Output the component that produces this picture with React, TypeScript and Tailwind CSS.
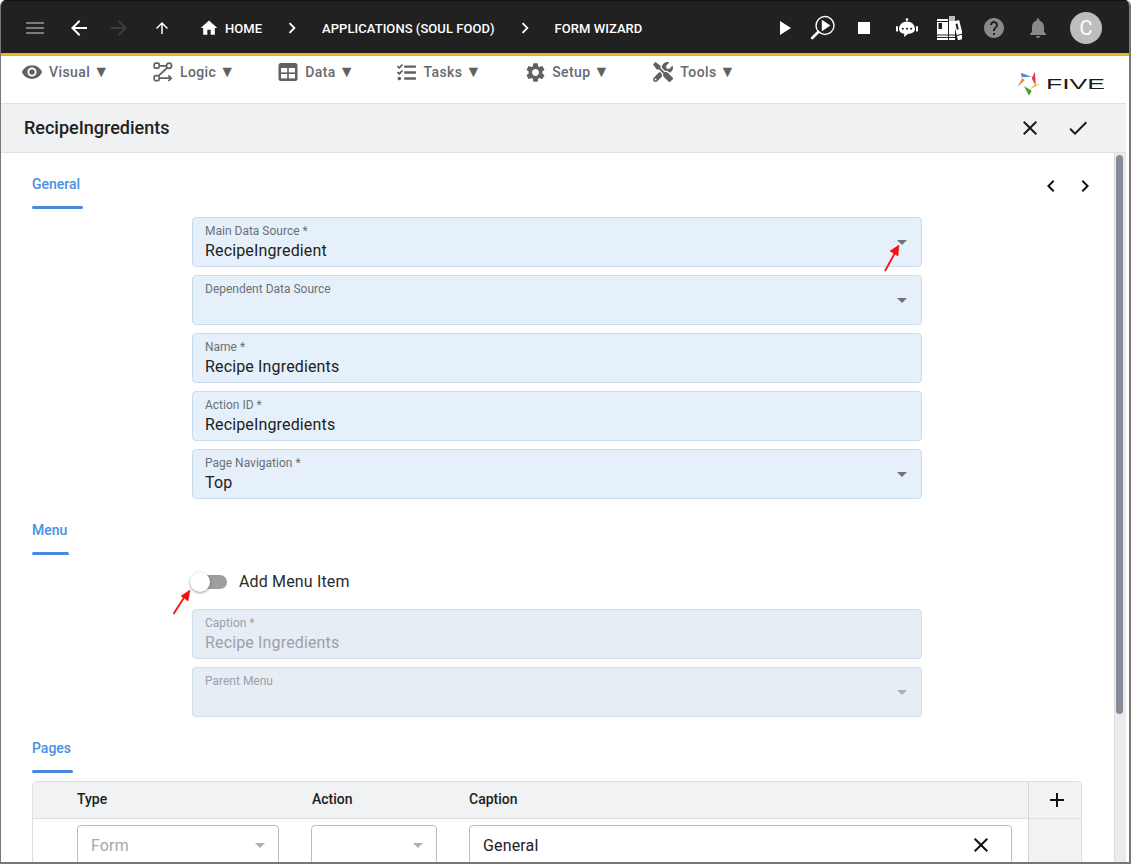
import React from "react";
import { FaTasks, FaTools } from "react-icons/fa";

const P: Record<string, string> = {
  menu: "M3 18h18v-2H3v2zm0-5h18v-2H3v2zm0-7v2h18V6H3z",
  back: "M20 11H7.83l5.59-5.59L12 4l-8 8 8 8 1.41-1.41L7.83 13H20v-2z",
  forward: "M12 4l-1.41 1.41L16.17 11H4v2h12.17l-5.58 5.59L12 20l8-8z",
  up: "M4 12l1.41 1.41L11 7.83V20h2V7.83l5.58 5.59L20 12l-8-8-8 8z",
  home: "M10 20v-6h4v6h5v-8h3L12 3 2 12h3v8z",
  right: "M10 6L8.59 7.41 13.17 12l-4.58 4.59L10 18l6-6z",
  left: "M15.41 7.41L14 6l-6 6 6 6 1.41-1.41L10.83 12z",
  play: "M8 5v14l11-7z",
  stop: "M6 6h12v12H6z",
  help: "M12 2C6.48 2 2 6.48 2 12s4.48 10 10 10 10-4.48 10-10S17.52 2 12 2zm1 17h-2v-2h2v2zm2.07-7.75l-.9.92C13.45 12.9 13 13.5 13 15h-2v-.5c0-1.1.45-2.1 1.17-2.83l1.24-1.26c.37-.36.59-.86.59-1.41 0-1.1-.9-2-2-2s-2 .9-2 2H8c0-2.21 1.79-4 4-4s4 1.79 4 4c0 .88-.36 1.68-.93 2.25z",
  bell: "M12 22c1.1 0 2-.9 2-2h-4c0 1.1.89 2 2 2zm6-6v-5c0-3.07-1.64-5.64-4.5-6.32V4c0-.83-.67-1.5-1.5-1.5s-1.5.67-1.5 1.5v.68C7.63 5.36 6 7.92 6 11v5l-2 2v1h16v-1l-2-2z",
  close: "M19 6.41L17.59 5 12 10.59 6.41 5 5 6.41 10.59 12 5 17.59 6.41 19 12 13.41 17.59 19 19 17.59 13.41 12z",
  check: "M9 16.17L4.83 12l-1.42 1.41L9 19 21 7l-1.41-1.41z",
  add: "M19 13h-6v6h-2v-6H5v-2h6V5h2v6h6v2z",
  eye: "M12 4.5C7 4.5 2.73 7.61 1 12c1.73 4.39 6 7.5 11 7.5s9.27-3.11 11-7.5c-1.73-4.39-6-7.5-11-7.5zM12 17c-2.76 0-5-2.24-5-5s2.24-5 5-5 5 2.24 5 5-2.24 5-5 5zm0-8c-1.66 0-3 1.34-3 3s1.34 3 3 3 3-1.34 3-3-1.34-3-3-3z",
  gear: "M19.14 12.94c.04-.3.06-.61.06-.94 0-.32-.02-.64-.07-.94l2.03-1.58c.18-.14.23-.41.12-.61l-1.92-3.32c-.12-.22-.37-.29-.59-.22l-2.39.96c-.5-.38-1.03-.7-1.62-.94l-.36-2.54c-.04-.24-.24-.41-.48-.41h-3.84c-.24 0-.43.17-.47.41l-.36 2.54c-.59.24-1.13.57-1.62.94l-2.39-.96c-.22-.08-.47 0-.59.22L2.74 8.87c-.12.21-.08.47.12.61l2.03 1.58c-.05.3-.09.63-.09.94s.02.64.07.94l-2.03 1.58c-.18.14-.23.41-.12.61l1.92 3.32c.12.22.37.29.59.22l2.39-.96c.5.38 1.03.7 1.62.94l.36 2.54c.05.24.24.41.48.41h3.84c.24 0 .44-.17.47-.41l.36-2.54c.59-.24 1.13-.56 1.62-.94l2.39.96c.22.08.47 0 .59-.22l1.92-3.32c.12-.22.07-.47-.12-.61l-2.01-1.58zM12 15.6c-1.98 0-3.6-1.62-3.6-3.6s1.62-3.6 3.6-3.6 3.6 1.62 3.6 3.6-1.62 3.6-3.6 3.6z",
};

function Ic({ d, size = 24, className = "" }: { d: string; size?: number; className?: string }) {
  return (
    <svg width={size} height={size} viewBox="0 0 24 24" fill="currentColor" className={`shrink-0 ${className}`}>
      <path d={P[d]} />
    </svg>
  );
}

function LogicIcon() {
  return (
    <svg width="20" height="20" viewBox="0 0 20 20" fill="none" stroke="#616161" strokeWidth="1.7" className="shrink-0">
      <rect x="1.2" y="1.2" width="5" height="5" rx="1.4" />
      <circle cx="16" cy="3.8" r="2.6" />
      <rect x="1.2" y="13.6" width="5" height="5" rx="1.4" />
      <path d="M6.5 3.8h6.8M14 6 5.5 13.8M6.5 16.2h11.5M15.4 13.4l2.8 2.8-2.8 2.8" />
    </svg>
  );
}

function DataIcon() {
  return (
    <svg width="20" height="20" viewBox="0 0 20 20" className="shrink-0">
      <rect x="0.5" y="1" width="19" height="18" rx="2.5" fill="#616161" />
      <rect x="3" y="6" width="6.2" height="4.4" fill="#fff" />
      <rect x="10.8" y="6" width="6.2" height="4.4" fill="#fff" />
      <rect x="3" y="12" width="6.2" height="4.4" fill="#fff" />
      <rect x="10.8" y="12" width="6.2" height="4.4" fill="#fff" />
    </svg>
  );
}

function SearchPlay() {
  return (
    <svg width="26" height="26" viewBox="0 0 26 26" fill="none" className="shrink-0">
      <circle cx="15" cy="10.5" r="9" stroke="#fff" strokeWidth="1.4" />
      <path d="M11.8 4.8v11.4l8.6-5.700z" fill="#fff" />
      <path d="M8.200 17 2.200 23" stroke="#fff" strokeWidth="2.6" strokeLinecap="round" />
    </svg>
  );
}

function Robot() {
  return (
    <svg width="24" height="20" viewBox="0 0 24 20" className="shrink-0">
      <circle cx="12" cy="1.600" r="1.300" fill="#fff" />
      <path d="M4 11c0-4.400 3.600-7.500 8-7.500s8 3.100 8 7.500c0 3-3 4.800-6.800 4.800L9.200 19v-3.300C6 15.300 4 13.700 4 11z" fill="#fff" />
      <rect x="1" y="8" width="2" height="5.600" rx="0.900" fill="#fff" />
      <rect x="21" y="8" width="2" height="5.600" rx="0.900" fill="#fff" />
      <circle cx="7.800" cy="10.800" r="1.050" fill="#212121" />
      <circle cx="12" cy="10.800" r="1.050" fill="#212121" />
      <circle cx="16.200" cy="10.800" r="1.050" fill="#212121" />
    </svg>
  );
}

function Books() {
  return (
    <svg width="26" height="26" viewBox="0 0 26 26" className="shrink-0">
      <rect x="1" y="4" width="11" height="21" fill="#fff" />
      <rect x="1" y="6" width="11" height="1" fill="#212121" />
      <rect x="2.500" y="8" width="3.500" height="6" fill="#212121" />
      <rect x="1" y="19.500" width="11" height="1" fill="#212121" />
      <rect x="1" y="22" width="11" height="1" fill="#212121" />
      <rect x="13" y="1" width="6" height="24" fill="#fff" />
      <rect x="13" y="1" width="6" height="5" fill="#bdbdbd" />
      <rect x="13" y="19.500" width="6" height="1" fill="#212121" />
      <rect x="13" y="22" width="6" height="1" fill="#212121" />
      <g transform="rotate(-14 22 15)">
        <rect x="19.500" y="5.500" width="6" height="19.500" fill="#fff" />
        <rect x="21" y="8.500" width="2" height="6" fill="#212121" />
        <rect x="19.500" y="19.500" width="6" height="1" fill="#212121" />
      </g>
    </svg>
  );
}

function Logo() {
  return (
    <svg width="90" height="28" viewBox="0 0 90 28" className="shrink-0">
      <polygon points="3.700,2.700 14.700,6.700 4.700,7.300" fill="#4a90e2" />
      <polygon points="18,1.700 18.700,16 14.700,8.300" fill="#e53935" />
      <polygon points="23.700,14 12.700,19.300 17,15" fill="#fbb829" />
      <polygon points="7,16 14.700,20.700 12,25.700" fill="#43a047" />
      <polygon points="0.300,17.300 5.300,8.300 7.700,10" fill="#f57c20" />
      <text x="29" y="19" textLength="59" lengthAdjust="spacingAndGlyphs" fontFamily="'Liberation Sans', sans-serif" fontSize="14" fill="#1a1a1a">FIVE</text>
    </svg>
  );
}

function Caret({ muted = false }: { muted?: boolean }) {
  return (
    <svg width="10" height="5" viewBox="0 0 10 5" className="shrink-0">
      <polygon points="0,0 10,0 5,5" fill={muted ? "#a9b0b8" : "#6f7378"} />
    </svg>
  );
}

function Crumb({ children }: { children: React.ReactNode }) {
  return <span className="text-[13px] font-medium tracking-[0.05px] text-white whitespace-nowrap">{children}</span>;
}

function ToolItem({ icon, label, className = "" }: { icon: React.ReactNode; label: string; className?: string }) {
  return (
    <div className={`flex items-center h-6 text-[14px] font-medium tracking-[0.4px] text-[#666a70] ${className}`}>
      <span className="w-5 h-5 flex items-center justify-center text-[#616161]">{icon}</span>
      <span className="ml-[7px]">{label}</span>
      <span className="ml-[3px] text-[16px] leading-6 tracking-normal text-[#616161]">▼</span>
    </div>
  );
}

function Section({ children, width }: { children: string; width: string }) {
  return (
    <div className="text-[14px] leading-5 font-medium text-[#4a90e2]">
      <div className={`${width} pb-3`}>{children}</div>
      <div className={`${width} h-[3px] bg-[#4a8ade] rounded-sm`} />
    </div>
  );
}

function Field({ label, value, select, disabled }: { label: string; value?: string; select?: boolean; disabled?: boolean }) {
  return (
    <div
      className={`flex items-center h-[50px] w-[730px] ml-[160px] pl-3 pr-[14px] rounded border ${
        disabled ? "bg-[#e6edf5] border-[#cfdeeb]" : "bg-[#e6f0fa] border-[#c8dcee]"
      }`}
    >
      <div className="flex-1 h-full pt-[6px]">
        <div className={`text-[12px] leading-[14px] ${disabled ? "text-[#9aa1a9]" : "text-[#6b7076]"}`}>{label}</div>
        <div className={`mt-[3px] text-[16px] leading-5 tracking-[0.15px] ${disabled ? "text-[#9ba1a8]" : "text-[#212121]"}`}>{value}</div>
      </div>
      {select && <Caret muted={disabled} />}
    </div>
  );
}

export default function App() {
  return (
    <div className="w-[1132px] h-[865px] bg-white overflow-hidden font-['Roboto',sans-serif]">
      <div className="relative flex flex-col w-[1131px] h-[864px] overflow-hidden rounded-t-md border-l border-r-2 border-b-2 border-[#777]">
        {/* Top bar */}
        <header className="flex items-center h-[56px] shrink-0 bg-[#212121] border-t border-[#111] border-b-[3px] border-b-[#f0b024] pt-[2px] pl-[14px] pr-[27px]">
          <button className="w-10 flex justify-center text-[#7a7a7a]"><Ic d="menu" /></button>
          <button className="w-10 ml-1 flex justify-center text-white"><Ic d="back" /></button>
          <button className="w-10 flex justify-center text-[#3d3d3d]"><Ic d="forward" /></button>
          <button className="w-10 ml-[3px] flex justify-center text-white"><Ic d="up" size={18} /></button>
          <Ic d="home" size={20} className="ml-[17px] text-white" />
          <span className="ml-[6px]"><Crumb>HOME</Crumb></span>
          <Ic d="right" size={22} className="ml-[19px] text-white" />
          <span className="ml-[19px]"><Crumb>APPLICATIONS (SOUL FOOD)</Crumb></span>
          <Ic d="right" size={22} className="ml-[19px] text-white" />
          <span className="ml-[19px]"><Crumb>FORM WIZARD</Crumb></span>
          <div className="ml-auto flex items-center">
            <Ic d="play" size={24} className="text-white" />
            <span className="ml-[14px]"><SearchPlay /></span>
            <Ic d="stop" size={24} className="ml-4 text-white" />
            <span className="ml-[19px]"><Robot /></span>
            <span className="ml-[17px]"><Books /></span>
            <Ic d="help" size={24} className="ml-5 text-[#8a8a8a]" />
            <Ic d="bell" size={24} className="ml-[20px] text-[#8a8a8a]" />
            <div className="ml-5 w-8 h-8 rounded-full bg-[#bdbdbd] flex items-center justify-center text-white text-[20px]">C</div>
          </div>
        </header>

        {/* Toolbar */}
        <nav className="flex h-[47px] shrink-0 pl-[21px] pr-[22px] pt-1">
          <div className="flex items-start">
            <ToolItem icon={<Ic d="eye" size={22} />} label="Visual" />
            <ToolItem className="ml-[44px]" icon={<LogicIcon />} label="Logic" />
            <ToolItem className="ml-[43px]" icon={<DataIcon />} label="Data" />
            <ToolItem className="ml-[42px]" icon={<FaTasks size={19} />} label="Tasks" />
            <ToolItem className="ml-[44px]" icon={<Ic d="gear" size={23} />} label="Setup" />
            <ToolItem className="ml-[44px]" icon={<FaTools size={20} />} label="Tools" />
          </div>
          <div className="ml-auto mt-[10px]"><Logo /></div>
        </nav>

        {/* Title bar */}
        <div className="flex items-center h-[50px] shrink-0 mr-[3px] bg-[#f0f1f3] border-y border-[#dfe0e2] pb-px pl-[23px] pr-9">
          <h1 className="text-[18px] font-medium text-[#212121]">RecipeIngredients</h1>
          <Ic d="close" size={24} className="ml-auto text-[#1a1a1a]" />
          <Ic d="check" size={24} className="ml-6 text-[#1a1a1a]" />
        </div>

        {/* Body */}
        <div className="flex flex-1 min-h-0 mr-[3px]">
          <main className="flex-1 min-w-0 overflow-hidden pl-[31px] pt-[21px]">
            <div className="flex justify-between items-start pr-3">
              <Section width="w-[51px]">General</Section>
              <div className="flex text-[#111]">
                <span className="w-[34px] flex justify-center"><Ic d="left" /></span>
                <span className="w-[34px] flex justify-center"><Ic d="right" /></span>
              </div>
            </div>
            <div className="flex flex-col gap-2 mt-2">
              <Field label="Main Data Source *" value="RecipeIngredient" select />
              <Field label="Dependent Data Source" select />
              <Field label="Name *" value="Recipe Ingredients" />
              <Field label="Action ID *" value="RecipeIngredients" />
              <Field label="Page Navigation *" value="Top" select />
            </div>

            <div className="mt-[21px]"><Section width="w-[37px]">Menu</Section></div>
            <div className="flex items-center h-[54px] ml-[158px]">
              <div className="relative w-[37px] h-[14px]">
                <div className="absolute left-[3px] top-0 w-[34px] h-[14px] rounded-full bg-[#9e9e9e]" />
                <div className="absolute left-0 -top-[3px] w-5 h-5 rounded-full bg-white shadow-[0_1px_3px_rgba(0,0,0,0.4)]" />
              </div>
              <span className="ml-3 text-[16px] tracking-[0.15px] text-[#2b2b2b]">Add Menu Item</span>
            </div>
            <div className="flex flex-col gap-2">
              <Field label="Caption *" value="Recipe Ingredients" disabled />
              <Field label="Parent Menu" select disabled />
            </div>

            <div className="mt-[21px]"><Section width="w-[41px]">Pages</Section></div>

            <div className="mt-2 w-[1050px] rounded-t border border-[#dedfe1]">
              <div className="flex h-[37px] bg-[#f1f2f4] border-b border-[#dedfe1] text-[14px] font-medium text-[#212121]">
                <div className="w-[995px] flex items-center pl-[44px] pb-[2px]">
                  <span className="w-[235px]">Type</span>
                  <span className="w-[157px]">Action</span>
                  <span>Caption</span>
                </div>
                <div className="flex-1 border-l border-[#d4d5d7] flex items-center justify-center pl-1 text-[#111]">
                  <Ic d="add" size={24} />
                </div>
              </div>
              <div className="flex h-[70px]">
                <div className="w-[995px] flex pl-[44px] pt-[6px]">
                  <div className="w-[202px] h-10 flex items-center pl-[13px] pr-[13px] border border-[#bdbdbd] rounded text-[16px] tracking-[0.15px] text-[#a8a8a8]">
                    <span className="flex-1 mt-px">Form</span>
                    <Caret muted />
                  </div>
                  <div className="ml-8 w-[126px] h-10 flex items-center justify-end pr-[13px] border border-[#bdbdbd] rounded">
                    <Caret muted />
                  </div>
                  <div className="ml-8 w-[543px] h-10 flex items-center pl-[13px] pr-[18px] border border-[#bdbdbd] rounded text-[16px] tracking-[0.15px] text-[#212121]">
                    <span className="flex-1 mt-px">General</span>
                    <Ic d="close" size={24} className="text-[#111]" />
                  </div>
                </div>
                <div className="flex-1 bg-[#f1f2f4] border-l border-[#d4d5d7]" />
              </div>
            </div>
          </main>

          {/* Scrollbar */}
          <div className="w-[12px] shrink-0 bg-[#ebebeb] border-l border-[#dcdcdc] pt-[2px] pl-px pr-[3px]">
            <div className="h-[559px] rounded-full bg-[#868b98]" />
          </div>
        </div>

        {/* Annotation arrows */}
        <svg className="absolute left-0 top-0 pointer-events-none" width="1128" height="860" viewBox="0 0 1128 860">
          <g transform="translate(-1,-1)" fill="#f50f0f" stroke="#f50f0f">
            <path d="M885 272 896 252" strokeWidth="1.800" fill="none" />
            <polygon points="899,246 898,257 890,252" strokeWidth="0.500" />
            <path d="M173.500 615 185 597" strokeWidth="1.800" fill="none" />
            <polygon points="190,591 188,602 181,597" strokeWidth="0.500" />
          </g>
        </svg>
      </div>
    </div>
  );
}
